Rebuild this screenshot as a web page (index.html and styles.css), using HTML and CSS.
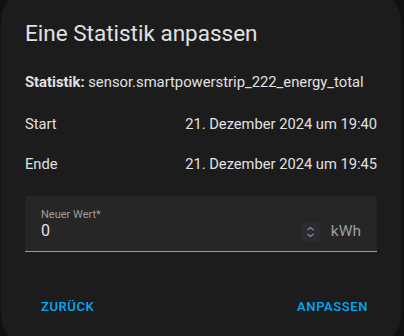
FILE: index.html
```html
<!DOCTYPE html>
<html lang="de">
<head>
<meta charset="utf-8">
<link rel="stylesheet" href="styles.css">
</head>
<body>
<div class="dialog">
  <h2 class="title">Eine Statistik anpassen</h2>
  <div class="stat"><b>Statistik:</b> sensor.smartpowerstrip_222_energy_total</div>
  <div class="row row-start"><span>Start</span><span>21. Dezember 2024 um 19:40</span></div>
  <div class="row row-end"><span>Ende</span><span>21. Dezember 2024 um 19:45</span></div>
  <div class="field">
    <div class="field-main">
      <div class="field-label">Neuer Wert*</div>
      <div class="field-value">0</div>
    </div>
    <div class="spinner">
      <svg width="19" height="18" viewBox="0 0 19 18">
        <path d="M6.5 7 L9.5 4.5 L12.5 7" fill="none" stroke="#8e8c96" stroke-width="1.2"/>
        <path d="M6.5 11 L9.5 13.5 L12.5 11" fill="none" stroke="#8e8c96" stroke-width="1.2"/>
      </svg>
    </div>
    <div class="suffix">kWh</div>
  </div>
  <div class="actions">
    <span class="btn">Zurück</span>
    <span class="btn">Anpassen</span>
  </div>
</div>
</body>
</html>
```
FILE: styles.css
```css
html, body {
  margin: 0;
  padding: 0;
  background: #111111;
  height: 100%;
  overflow: hidden;
}
body {
  font-family: Roboto, "Noto Sans", sans-serif;
  color: #e1e1e1;
}
.dialog {
  box-sizing: border-box;
  margin: -8px 0 0 1px;
  width: 400px;
  height: 352px;
  background: #1c1c1c;
  border-radius: 28px;
  padding: 25px 24px 0 24px;
  display: flex;
  flex-direction: column;
}
.title {
  margin: 0;
  font-size: 22.5px;
  font-weight: 400;
  line-height: 32px;
  height: 32px;
  color: #e1e1e1;
}
.stat {
  margin-top: 23px;
  font-size: 14.8px;
  line-height: 20px;
}
.stat b {
  font-weight: 700;
}
.row {
  display: flex;
  justify-content: space-between;
  font-size: 14.7px;
  line-height: 20px;
}
.row-start { margin-top: 22px; }
.row-end { margin-top: 20px; }
.field {
  margin-top: 22px;
  height: 56px;
  box-sizing: border-box;
  background: #262626;
  border-radius: 4px 4px 0 0;
  border-bottom: 1px solid #9a9a9a;
  display: flex;
  align-items: flex-start;
  padding: 0 16px;
}
.field-main {
  flex: 1;
  display: flex;
  flex-direction: column;
  padding-top: 13px;
}
.field-label {
  font-size: 11px;
  line-height: 12px;
  color: #9e9e9e;
}
.field-value {
  font-size: 16px;
  line-height: 20px;
  color: #e1e1e1;
}
.spinner {
  width: 19px;
  height: 18px;
  background: #2b2a33;
  margin-top: 27px;
  margin-right: 11px;
  display: flex;
}
.suffix {
  font-size: 15.5px;
  line-height: 20px;
  color: #9e9e9e;
  margin-top: 25px;
}
.actions {
  margin-top: 36px;
  display: flex;
  justify-content: space-between;
  padding: 0 9px 0 16px;
  height: 36px;
  align-items: center;
}
.btn {
  font-size: 13px;
  font-weight: 500;
  letter-spacing: 0.6px;
  text-transform: uppercase;
  color: #03a9f4;
}
```
